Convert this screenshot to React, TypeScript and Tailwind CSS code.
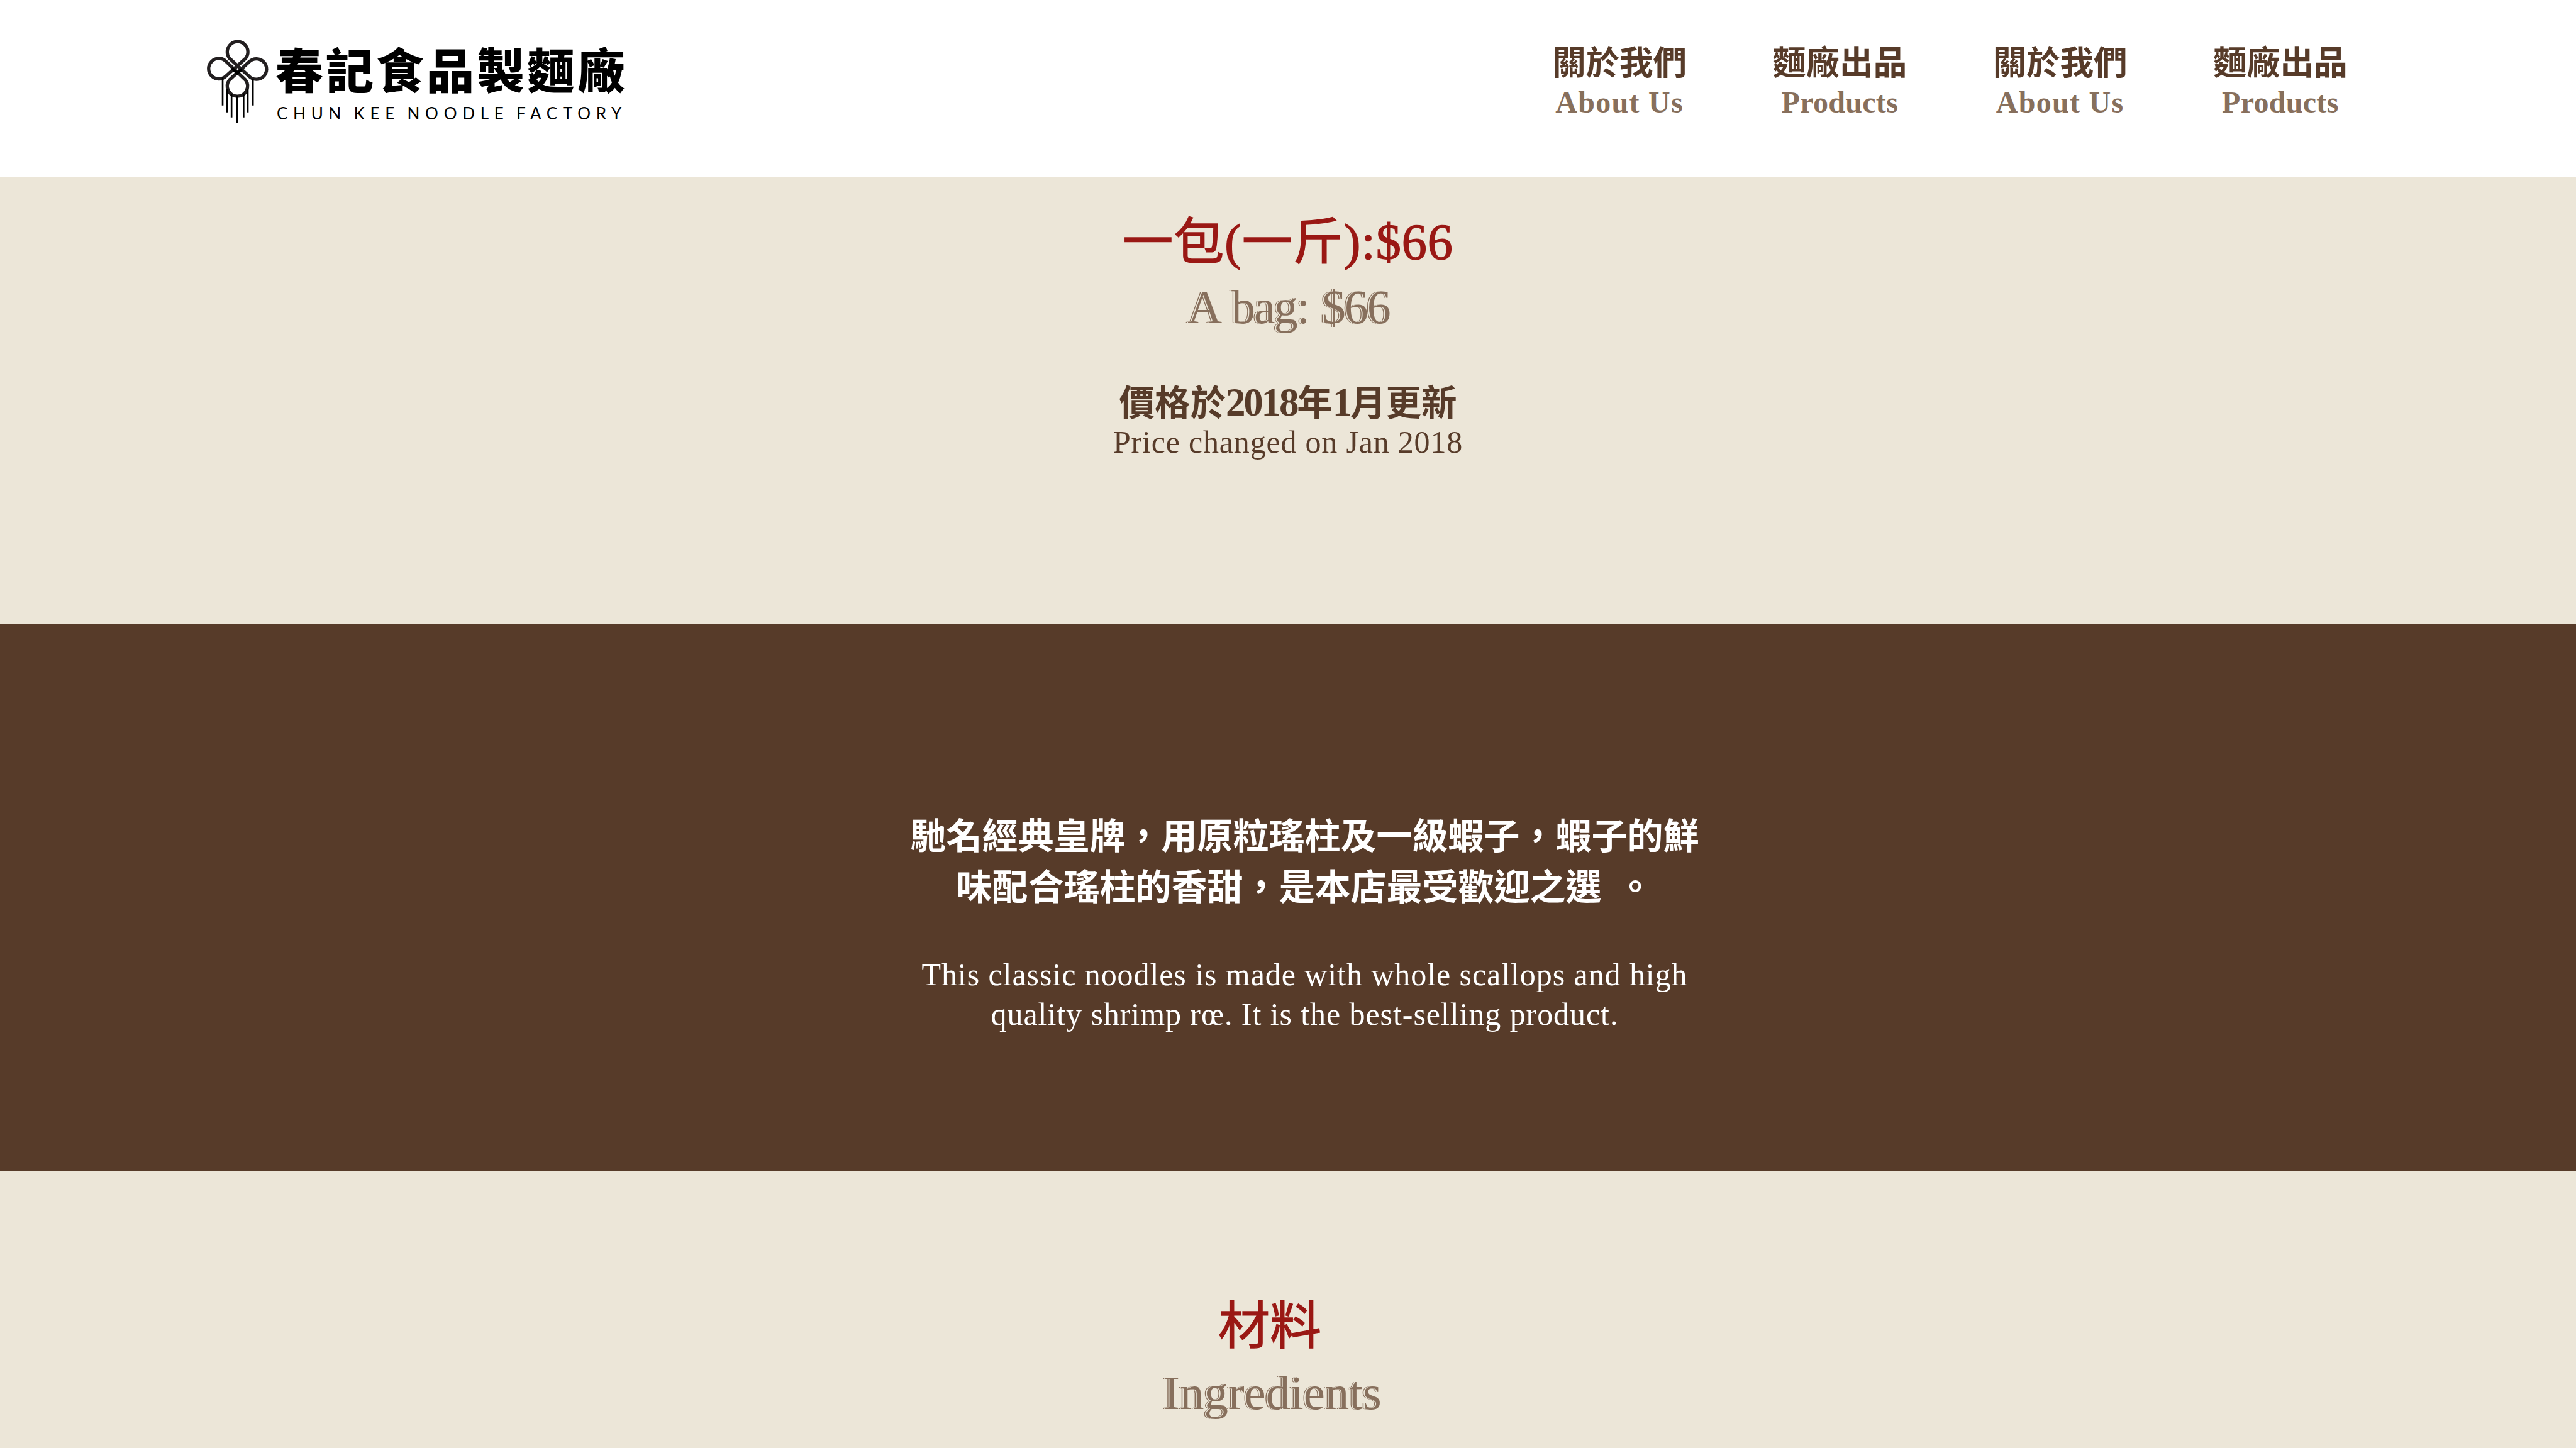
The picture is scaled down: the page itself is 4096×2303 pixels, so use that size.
import React from "react";

const cjk = "font-['Noto_Sans_CJK_TC',sans-serif]";
const serif = "font-['Liberation_Serif','Noto_Sans_CJK_TC',serif]";
const engraved =
  "text-[#876f5c] [text-shadow:-1.8px_0_0_#ece6d8,-3.2px_0_0_#876f5c]";
const digits = "text-[63px] leading-[0] tracking-[-3.2px]";

const nav = [
  { zh: "關於我們", en: "About Us", tracking: "tracking-[1.3px]" },
  { zh: "麵廠出品", en: "Products", tracking: "tracking-[0.3px]" },
  { zh: "關於我們", en: "About Us", tracking: "tracking-[1.3px]" },
  { zh: "麵廠出品", en: "Products", tracking: "tracking-[0.3px]" },
];

function Knot() {
  return (
    <svg viewBox="70 50 430 565" className="h-[135.5px] w-[103px] shrink-0" fill="none">
      <path
        d="M362 297 L232 178 A68.5 68.5 0 1 1 340 178 L209 296 A68 68 0 1 1 209 198 L339 322 C372 368 340 430 285 430 C230 430 198 368 231 322 L364 200 A68 68 0 1 1 362 297 Z"
        stroke="#231f20"
        strokeWidth="22"
        strokeLinejoin="round"
      />
      <path d="M248 243 L284 276 L315 250" stroke="#000" strokeWidth="20" />
      <path
        d="M187 305V491M217 380V537M246 413V570M284 423V607M326 411V570M354 380V537M388 313V491"
        stroke="#000"
        strokeWidth="11"
      />
    </svg>
  );
}

export default function App() {
  return (
    <div className="flex h-[2303px] w-[4096px] flex-col overflow-hidden bg-[#ece6d8]">
      <header className="flex h-[282px] shrink-0 items-start justify-between bg-white pr-[295px] pl-[326px]">
        <div className="flex pt-[62px]">
          <Knot />
          <div className="ml-[9px] flex flex-col whitespace-nowrap text-black">
            <div className={`${cjk} mt-[6px] h-[80px] text-[76px] leading-[80px] font-black tracking-[4px]`}>
              春記食品製麵廠
            </div>
            <div className="mt-[18px] ml-[2px] h-[28px] font-['Lato',sans-serif] text-[26px] leading-[28px] tracking-[8.75px] [word-spacing:-4px]">
              CHUN KEE NOODLE FACTORY
            </div>
          </div>
        </div>
        <nav className="flex pt-[69px]">
          {nav.map((item, i) => (
            <a key={i} className="flex w-[350.25px] flex-col items-center whitespace-nowrap">
              <span className={`${cjk} text-[53.5px] leading-[54px] font-bold text-[#573b29]`}>{item.zh}</span>
              <span className={`${serif} mt-[12px] text-[48px] leading-[56px] font-bold text-[#876f5c] ${item.tracking}`}>
                {item.en}
              </span>
            </a>
          ))}
        </nav>
      </header>

      <section className="flex h-[711px] shrink-0 flex-col items-center pt-[55px] whitespace-nowrap">
        <h1 className={`${serif} h-[96px] text-[80px] leading-[96px] tracking-[1px] text-[#9a1814] [-webkit-text-stroke:1.4px_#9a1814]`}>
          一包(一斤):$66
        </h1>
        <p className={`${serif} ${engraved} mt-[10px] ml-[2px] h-[90px] text-[76px] leading-[90px] tracking-[-2px] [word-spacing:4px]`}>
          A bag: $66
        </p>
        <p className={`${serif} mt-[76px] h-[66px] text-[56.5px] leading-[66px] font-bold text-[#573b29]`}>
          價格於<span className={digits}>2018</span>年<span className={digits}>1</span>月更新
        </p>
        <p className={`${serif} mt-px h-[54px] text-[50px] leading-[54px] tracking-[0.8px] text-[#573b29]`}>
          Price changed on Jan 2018
        </p>
      </section>

      <section className="flex h-[869px] shrink-0 flex-col items-center bg-[#573b29] pt-[292px] pl-[53px] text-center whitespace-nowrap text-white">
        <p className={`${cjk} text-[57px] leading-[80.5px] font-bold`}>
          馳名經典皇牌，用原粒瑤柱及一級蝦子，蝦子的鮮
          <br />
          味配合瑤柱的香甜，是本店最受歡迎之選<span className="inline-block w-[25px]"> </span>。
        </p>
        <p className={`${serif} mt-[73px] text-[50px] leading-[62.7px] tracking-[0.93px]`}>
          This classic noodles is made with whole scallops and high
          <br />
          quality shrimp rœ. It is the best-selling product.
        </p>
      </section>

      <section className="flex flex-1 flex-col items-center pt-[195px] pr-[52px] whitespace-nowrap">
        <h2 className={`${cjk} mr-[6px] h-[90px] text-[82px] leading-[90px] text-[#9a1814] [-webkit-text-stroke:1.4px_#9a1814]`}>材料</h2>
        <p className={`${serif} ${engraved} mt-[23px] ml-[3px] h-[90px] text-[77px] leading-[90px]`}>Ingredients</p>
      </section>
    </div>
  );
}
